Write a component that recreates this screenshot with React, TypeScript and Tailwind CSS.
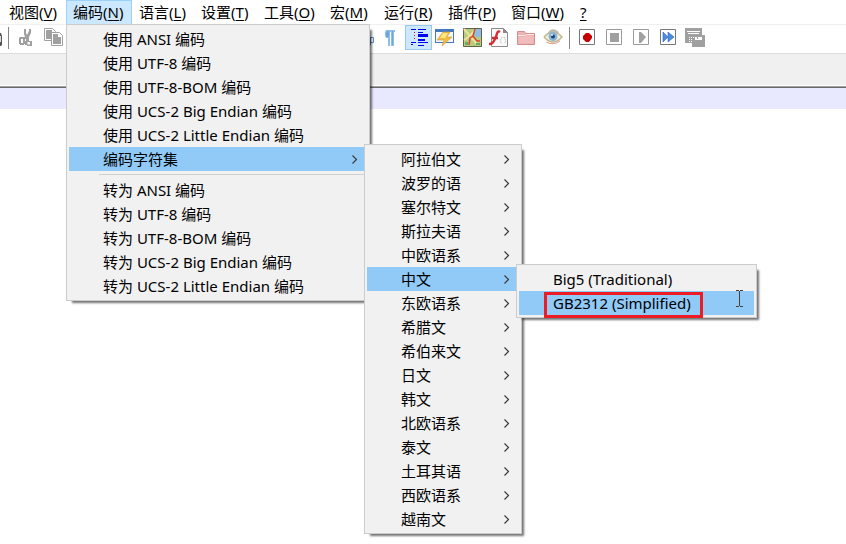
import React, { ReactNode } from "react";

const menuFont = "font-['Noto_Sans','Noto_Sans_CJK_SC',sans-serif]";

type MenuTitle = { label: string; accessKey: string; width: string };

const before: MenuTitle[] = [{ label: "视图", accessKey: "V", width: "w-16" }];
const after: MenuTitle[] = [
  { label: "语言", accessKey: "L", width: "w-[62px]" },
  { label: "设置", accessKey: "T", width: "w-[63px]" },
  { label: "工具", accessKey: "O", width: "w-[66px]" },
  { label: "宏", accessKey: "M", width: "w-[54px]" },
  { label: "运行", accessKey: "R", width: "w-16" },
  { label: "插件", accessKey: "P", width: "w-[63px]" },
  { label: "窗口", accessKey: "W", width: "w-[69px]" },
];

const useEncodings = ["ANSI", "UTF-8", "UTF-8-BOM", "UCS-2 Big Endian", "UCS-2 Little Endian"];

const charsetsBefore = ["阿拉伯文", "波罗的语", "塞尔特文", "斯拉夫语", "中欧语系"];
const charsetsAfter = [
  "东欧语系", "希腊文", "希伯来文", "日文", "韩文", "北欧语系", "泰文", "土耳其语", "西欧语系", "越南文",
];

function Title({ label, accessKey, width }: MenuTitle) {
  return (
    <button className={`${width} h-6 shrink-0 whitespace-nowrap pl-[7px] text-left`}>
      {label}(<span className="underline underline-offset-2">{accessKey}</span>)
    </button>
  );
}

function Chevron() {
  return (
    <svg className="mr-2 h-[9px] w-[9px]" viewBox="0 0 9 9" fill="none" stroke="#3c3c3c" strokeWidth="1.2">
      <path d="M2.500 0.500 6.500 4.500 2.500 8.500" />
    </svg>
  );
}

function Panel({ width, place, children }: { width: string; place: string; children: ReactNode }) {
  return (
    <ul
      role="menu"
      className={`absolute z-10 ${place} ${width} border border-[#cccccc] bg-[#f1f1f1] p-0.5 shadow-[4px_4px_2px_-2px_rgba(0,0,0,0.55)]`}
    >
      {children}
    </ul>
  );
}

function Item({
  label, active = false, arrow = false, children,
}: { label: string; active?: boolean; arrow?: boolean; children?: ReactNode }) {
  return (
    <li role="none" className="relative">
      <button
        role="menuitem"
        className={`flex h-6 w-full items-center justify-between whitespace-nowrap pl-[34px] text-left ${active ? "bg-[#91c9f7]" : ""}`}
      >
        <span>{label}</span>
        {arrow && <Chevron />}
      </button>
      {children}
    </li>
  );
}

function Tool({ name, active = false, children }: { name: string; active?: boolean; children: ReactNode }) {
  return (
    <button
      aria-label={name}
      className={`flex h-[25px] w-[27px] shrink-0 items-start ${active ? "border border-[#99c9ef] bg-[#cce8ff] pl-0.5 pt-px" : "pl-[3px] pt-0.5"}`}
    >
      <svg className="h-5 w-5 shrink-0" viewBox="0 0 20 20" fill="none">
        {children}
      </svg>
    </button>
  );
}

function Divider() {
  return <div className="mt-0.5 h-[22px] w-px shrink-0 bg-[#858585]" />;
}

function Toolbar() {
  return (
    <div role="toolbar" className="flex h-[29px] items-start overflow-hidden border-b border-[#dcdcdc] bg-white">
      <svg className="mt-1 h-5 w-2 shrink-0" viewBox="0 0 8 20">
        <path d="M0 4h1l1 3v9l-1 1H0z" fill="#555" />
        <path d="M0 7h1v6H0z" fill="#ddd" />
      </svg>
      <Divider />
      <span className="w-1 shrink-0" />
      <Tool name="剪切">
        <path d="M8 2h2v4l1 2 2-4V2h2v4l-2 4v2H9v-2L8 7z" fill="#a0a0a0" />
        <path d="M4 10h6v2H5v1H3v-2zM3 12h2v5H3zM4 16h4v2H4zM7 12h2v5H7z" fill="#a0a0a0" />
        <path d="M10 11h3v3h3v5h-5v-1H9v-4h1zM11.500 15v2.500h2.500V15z" fill="#a0a0a0" fillRule="evenodd" />
      </Tool>
      <Tool name="复制">
        <path d="M1.500 1.500h8l3 3v9h-11z" fill="#fff" stroke="#a0a0a0" />
        <path d="M3 3h6v3h2v6H3z" fill="#a0a0a0" />
        <path d="M8.500 5.500h8l3 3v10h-11z" fill="#fff" stroke="#a0a0a0" />
        <path d="M10 7h5v3h3v7h-8z" fill="#a0a0a0" />
      </Tool>
      <span className="w-[284px] shrink-0" />
      <Tool name="自动换行">
        <path d="M1 5.500h12M12 10.500h7.500v5h-5M16.500 10v8l-4-3z" stroke="#5d8bc4" />
      </Tool>
      <Tool name="显示所有字符">
        <path d="M5 3h9v2h-1v14h-3V5H9v14H7v-8H5L4 9V5z" fill="#91bee8" />
        <path d="M6 4h2v6H6L5 9V6zM11 4h1v14h-1z" fill="#6aa8e2" />
      </Tool>
      <Tool name="显示缩进参考线" active>
        <path d="M3 2.500h5M10 2.500h8M10 5.500h5M3 15.500h5M10 15.500h11M3 17.500h2M10 18.500h6" stroke="#0000e8" />
        <path d="M10 7h11v3H10zM10 12h7v2h-7z" fill="#0000f5" />
        <path d="M6.500 5v9" stroke="#f00000" strokeDasharray="1 2" />
      </Tool>
      <Tool name="用户自定义语言">
        <rect x="0.500" y="2.500" width="18" height="13" fill="#f3f8ff" stroke="#4979bd" />
        <path d="M0 2h19v3H0z" fill="#4379c2" />
        <path d="M8 5h7l-3 5h5l-10 9 2-6H2z" fill="#f1bd43" stroke="#d79b2e" strokeWidth=".6" />
        <path d="M8 6h5l-3 5H5z" fill="#ffe784" />
      </Tool>
      <Tool name="文档地图">
        <path d="M1.500 1.500h18v18h-18z" fill="#b8cc80" stroke="#62624c" />
        <path d="M12 2h7v8h-5l-2-3z" fill="#8fbce2" />
        <path d="M2 2l6 7 5-6M2 13l6-4 8 9" stroke="#eee39a" strokeWidth="2" />
        <path d="M7 18l1-7 3-2 2-7M11 9l4 5h3" stroke="#d94635" strokeWidth="1.500" />
        <path d="M3 15h3v3H3zM14 16h4v2h-4z" fill="#69aa65" />
      </Tool>
      <Tool name="函数列表">
        <path d="M2.500 1.500h12l4 4v14h-16z" fill="#fafafa" stroke="#8a8a8a" />
        <path d="M14 1v5h5z" fill="#888" />
        <path d="M11 5C8 3 8 8 6 12s-3 5-6 5M3 11h6" stroke="#d52d36" strokeWidth="2.400" />
        <path d="M13 10l-2 4 2 3M15 10l2 4-2 3" stroke="#aaa" strokeDasharray="1 1" />
      </Tool>
      <Tool name="文件夹工作区">
        <path d="M1.500 17.500v-13h7l1 2h9v11z" fill="#eeb4b4" stroke="#d58d8d" />
        <path d="M3 16v-6h6l1-1h7v7z" fill="#f0bcbc" />
        <path d="M2 8.500h7l1-1h8" stroke="#fbe7e7" />
      </Tool>
      <Tool name="监视文件">
        <path d="M5 6c2-5 8-5 11 0z" fill="#b9b9b0" />
        <path d="M1 10Q10 0 19 10 10 20 1 10" fill="#f2f1df" stroke="#c4b891" strokeWidth="1.500" />
        <path d="M3 15q7 4 14-1" stroke="#e49b80" />
        <circle cx="10" cy="9.500" r="4.500" fill="#87b4d9" />
        <circle cx="10" cy="9.500" r="2" fill="#243f6c" />
        <circle cx="9" cy="8" r="1" fill="#d8f0ff" />
      </Tool>
      <span className="w-0.5 shrink-0" />
      <Divider />
      <span className="w-1 shrink-0" />
      <Tool name="开始录制">
        <path d="M2.500 2.500h15v15h-15z" stroke="#777" />
        <path d="M9 6h3l3 3v2l-3 4H9l-3-3V9z" fill="#c60000" />
      </Tool>
      <Tool name="停止录制">
        <path d="M2.500 2.500h15v15h-15z" stroke="#999" />
        <path d="M6 6h9v9H6z" fill="#a0a0a0" />
      </Tool>
      <Tool name="播放">
        <path d="M2.500 2.500h15v15h-15z" stroke="#999" />
        <path d="M8 5h2l5 5-5 6H8z" fill="#a0a0a0" />
      </Tool>
      <Tool name="多次运行宏">
        <path d="M2.500 2.500h15v15h-15z" stroke="#777" />
        <path d="M5 5l5 5-5 5zM10 5l6 5-6 5z" fill="#4d8ce0" stroke="#2e67c0" strokeWidth=".6" />
      </Tool>
      <Tool name="保存录制的宏">
        <path d="M0 1h17v7h3v12H7v-4H0z" fill="#a0a0a0" />
        <path d="M2 4.500h13M3 6.500h11" stroke="#fff" />
        <path d="M4 10.500h5M4 12.500h3M4 14.500h3" stroke="#fff" strokeDasharray="1 1" />
        <path d="M10 10h7v3h-7z" fill="#fff" />
        <path d="M12 10h1v2h-1z" fill="#a0a0a0" />
      </Tool>
    </div>
  );
}

export default function App() {
  return (
    <div className={`min-h-screen overflow-hidden bg-white text-[15px] leading-6 text-black ${menuFont}`}>
      <nav className="flex h-6 pl-0.5">
        {before.map((m) => <Title key={m.label} {...m} />)}
        <div className="relative shrink-0">
          <button className="flex h-6 w-[66px] whitespace-nowrap border border-b-0 border-[#99d1ff] bg-[#cce8ff] pl-1.5 text-left leading-[22px]">
            编码(<span className="underline underline-offset-2">N</span>)
          </button>
          <Panel width="w-[304px]" place="left-0 top-6">
            {useEncodings.map((e) => <Item key={e} label={`使用 ${e} 编码`} />)}
            <Item label="编码字符集" active arrow>
              <Panel width="w-[158px]" place="left-full -top-[3px] -ml-[3px]">
                {charsetsBefore.map((c) => <Item key={c} label={c} arrow />)}
                <Item label="中文" active arrow>
                  <Panel width="w-[241px]" place="left-full -top-[3px] -ml-[3px]">
                    <Item label="Big5 (Traditional)" />
                    <Item label="GB2312 (Simplified)" active>
                      <div className="pointer-events-none absolute left-[25px] top-px h-[26px] w-[159px] border-[3px] border-[#ed1c24]" />
                      <svg className="pointer-events-none absolute -top-px right-[11px] h-[17px] w-[7px]" viewBox="0 0 7 17" fill="none" stroke="#4a4038">
                        <path d="M0 .5h3M4 .5h3M3.500 1v15M0 16.500h3M4 16.500h3" />
                      </svg>
                    </Item>
                  </Panel>
                </Item>
                {charsetsAfter.map((c) => <Item key={c} label={c} arrow />)}
              </Panel>
            </Item>
            <li role="separator" className="ml-[30px] flex h-[7px] items-center">
              <span className="h-px w-full bg-[#d0d0d0]" />
            </li>
            {useEncodings.map((e) => <Item key={e} label={`转为 ${e} 编码`} />)}
          </Panel>
        </div>
        {after.map((m) => <Title key={m.label} {...m} />)}
        <button className="h-6 w-[22px] shrink-0 pl-[7px] text-left underline underline-offset-2">?</button>
      </nav>
      <div className="border-t border-[#f0f0f0]">
        <Toolbar />
      </div>
      <div className="h-[31px] bg-[#f0f0f0]" />
      <div className="h-[3px] border-b border-t border-b-[#696969] border-t-white bg-[#a0a0a0]" />
      <main aria-label="编辑区">
        <div className="h-[21px] bg-[#e8e8ff]" />
      </main>
    </div>
  );
}
